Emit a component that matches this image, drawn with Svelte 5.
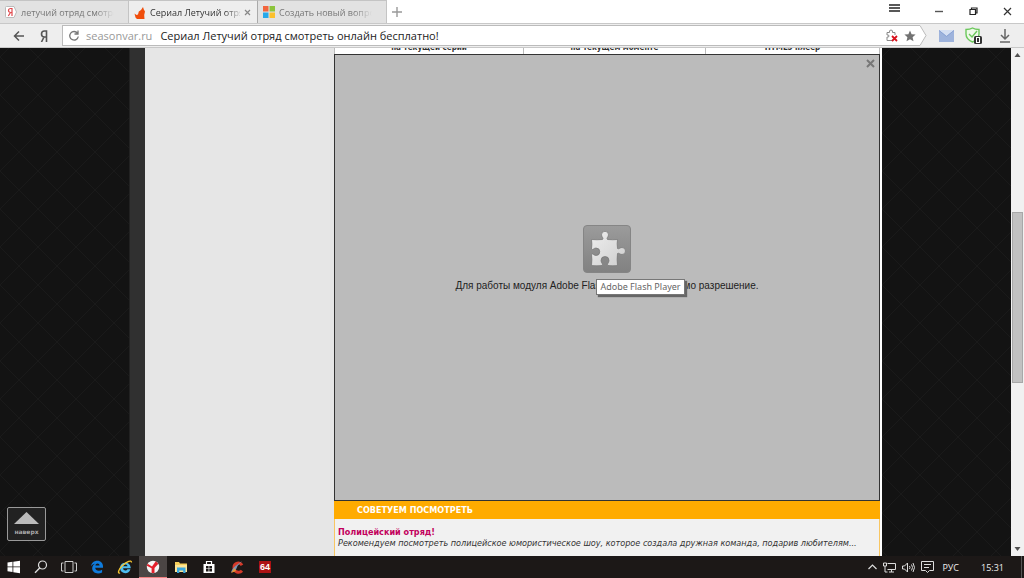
<script>
  const tabs = [
    { title: 'летучий отряд смотреть', icon: 'yandex' },
    { title: 'Сериал Летучий отряд', icon: 'fox', active: true },
    { title: 'Создать новый вопрос', icon: 'ms' }
  ];
  let address = $state('Сериал Летучий отряд смотреть онлайн бесплатно!');
  const apps = [
    { id: 'start', label: 'Пуск' },
    { id: 'search', label: 'Поиск' },
    { id: 'tasks', label: 'Представление задач' },
    { id: 'edge', label: 'Microsoft Edge' },
    { id: 'ie', label: 'Internet Explorer' },
    { id: 'browser', label: 'Яндекс.Браузер', active: true },
    { id: 'folder', label: 'Проводник' },
    { id: 'store', label: 'Магазин' },
    { id: 'ccleaner', label: 'CCleaner' },
    { id: 'aida', label: 'AIDA64' }
  ];
</script>

<div class="screen">
  <header class="tabbar">
    {#each tabs as tab}
      <div class="tab" class:active={tab.active}>
        <svg class="fav" viewBox="0 0 12 12" aria-hidden="true">
          {#if tab.icon === 'yandex'}
            <path d="M1.500 .5h7.500l2.500 5.500-2.500 5.500H1.500q-1 0-1-1v-9q0-1 1-1z" fill="#fff" stroke="#bbb" />
            <path d="M7 10V2.500H5.700C4.200 2.500 3.500 3.400 3.500 4.500S4.200 6.500 5.700 6.500H7M5.500 6.500L3.300 10" fill="none" stroke="#e0484c" stroke-width="1.200" />
          {:else if tab.icon === 'fox'}
            <path d="M.5 6.500l2 1.500L4 7.500l.8-3L7 3l2-3 .8 2.500L11 4.500 10.200 8l.3 4H3L1.500 10.500z" fill="#f04e0c" />
          {:else}
            <path d="M0 0h5.500v5.500H0z" fill="#f2643c" /><path d="M6.500 0H12v5.500H6.500z" fill="#8cc43c" />
            <path d="M0 6.500h5.500V12H0z" fill="#28a8ea" /><path d="M6.500 6.500H12V12H6.500z" fill="#fcc02c" />
          {/if}
        </svg>
        <a class="title" href="#top">{tab.title}</a>
        {#if tab.active}
          <button class="close" aria-label="Закрыть вкладку"><svg width="7" height="7" viewBox="0 0 7 7"><path d="M1 1l5 5M6 1L1 6" stroke="#888" stroke-width="1.200" /></svg></button>
        {/if}
      </div>
    {/each}
    <button class="new" aria-label="Новая вкладка"><svg width="10" height="10" viewBox="0 0 10 10"><path d="M5 0v10M0 5h10" stroke="#999" stroke-width="1.400" /></svg></button>
    <div class="window">
      <button aria-label="Меню"><svg class="menu" width="12" height="9" viewBox="0 0 12 9"><path d="M0 1h11M0 4h11M0 7h11" stroke="#222" stroke-width="1.700" /></svg></button>
      <button aria-label="Свернуть"><svg width="8" height="9" viewBox="0 0 8 9"><path d="M0 4.500h8" stroke="#555" stroke-width="1.400" /></svg></button>
      <button aria-label="Развернуть"><svg width="9" height="9" viewBox="0 0 9 9"><path d="M1 2.500h5.500v5H1zM2.500 2.500V1H8v5H6.500" fill="none" stroke="#222" stroke-width="1.200" /></svg></button>
      <button aria-label="Закрыть"><svg width="9" height="9" viewBox="0 0 9 9"><path d="M1 1l7 7M8 1L1 8" stroke="#333" stroke-width="1.200" /></svg></button>
    </div>
  </header>

  <nav class="toolbar">
    <button class="back" aria-label="Назад"><svg width="12" height="12" viewBox="0 0 12 12"><path d="M6 1.500L1.500 6 6 10.500M1.500 6H11" fill="none" stroke="#555" stroke-width="1.500" /></svg></button>
    <button class="ya" aria-label="Яндекс"><svg width="8" height="12" viewBox="0 0 8 12"><path d="M6.500 12V1H4.500C2.500 1 1.500 2.200 1.500 4s1 3 3 3h2M4 7L1.500 12" fill="none" stroke="#555" stroke-width="1.600" /></svg></button>
    <div class="address">
      <button aria-label="Обновить"><svg width="12" height="12" viewBox="0 0 12 12"><path d="M9.500 3.200A4.300 4.300 0 1 0 10.300 6.500M10 .5v3.500H6.500" fill="none" stroke="#777" stroke-width="1.300" /></svg></button>
      <label for="url">seasonvar.ru</label>
      <input id="url" type="text" bind:value={address} />
      <svg width="13" height="13" viewBox="0 0 13 13" aria-hidden="true">
        <path d="M2 11.500V8q2 .5 2-1T2 6V3.500h2.500Q4 1 6 1t1.500 2.500H10V6M2 11.500h5" fill="none" stroke="#888" />
        <path d="M7 7l5 5M12 7l-5 5" stroke="#d8101c" stroke-width="1.800" />
      </svg>
      <button aria-label="В закладки"><svg width="12" height="12" viewBox="0 0 12 12"><path d="M6 .5l1.600 3.800 4 .3-3 2.700.9 4L6 9.200l-3.500 2.100.9-4-3-2.700 4-.3z" fill="#727272" /></svg></button>
    </div>
    <svg class="tip" width="7" height="21" viewBox="0 0 7 21" aria-hidden="true"><path d="M0 0l6 10.500L0 21z" fill="#fff" /><path d="M0 .5l6 10L0 20.500" fill="none" stroke="#bbb" /></svg>
    <button class="mail" aria-label="Почта"><svg width="15" height="12" viewBox="0 0 15 12"><path d="M0 0h15v12H0z" fill="#9eb3dc" /><path d="M0 0l7.500 6L15 0z" fill="#d5dff2" /><path d="M0 .5l7.500 6 7.500-6" fill="none" stroke="#8aa3d4" /></svg></button>
    <button class="shield" aria-label="Защита">
      <svg width="18" height="18" viewBox="0 0 18 18">
        <path d="M7.500 1Q10 2.500 14 2.500V7c0 4-3 6.500-6.500 8C4 13.500 1 11 1 7V2.500Q5 2.500 7.500 1z" fill="#eefae9" stroke="#6cc85c" stroke-width="1.400" />
        <path d="M4 7l3 3 5-6" fill="none" stroke="#6cc85c" stroke-width="1.400" />
        <rect x="9" y="9" width="8" height="8" rx="1.500" fill="#333" /><rect x="11.500" y="10.500" width="3" height="5" fill="none" stroke="#fff" />
      </svg>
    </button>
    <button class="down" aria-label="Загрузки"><svg width="12" height="14" viewBox="0 0 12 14"><path d="M6 0v10M2 6l4 4 4-4M1 13h10" fill="none" stroke="#666" stroke-width="1.500" /></svg></button>
  </nav>

  <div class="viewport">
    <div class="page" id="top">
      <div class="dark"></div>
      <div class="edge"></div>
      <aside></aside>
      <main>
        <div class="options"><span>на текущей серии</span><span>на текущем моменте</span><span>HTML5 плеер</span></div>
        <section class="player">
          <button class="dismiss" aria-label="Скрыть модуль"><svg width="9" height="9" viewBox="0 0 9 9"><path d="M1 1l7 7M8 1L1 8" stroke="#777" stroke-width="2" /></svg></button>
          <div class="plugin">
            <svg width="48" height="48" viewBox="0 0 48 48" aria-hidden="true">
              <defs>
                <linearGradient id="tile" x2="0" y2="1"><stop stop-color="#9b9b9b" /><stop offset="1" stop-color="#818181" /></linearGradient>
                <linearGradient id="piece" x2="1" y2="1"><stop stop-color="#eee" /><stop offset="1" stop-color="#cecece" /></linearGradient>
              </defs>
              <rect x=".5" y=".5" width="47" height="47" rx="3.500" fill="url(#tile)" stroke="#858585" />
              <path d="M8.500 14.500Q14 15 19.500 14.500c1.500-1.500-1-2.500-1-4.700a3.500 3.500 0 0 1 7 0c0 2.200-2.500 3.200-1 4.700Q30 15 34.500 14.500q-.7 4 0 9c1.500 1 2.500-1 4.500-1a3.500 3.500 0 0 1 0 7c-2 0-3-2-4.500-1q-.8 6 0 12Q30 41 25 40.500c-1.500-1.500 1-2.500 1-5a4 4 0 0 0-8 0c0 2.500 2.500 3.500 1 5Q14 41 8.500 40.500q.8-6 0-11c1.500-1.500 2 1 4.500 1a3.500 3.500 0 0 0 0-7.500c-2.500 0-3 2.500-4.500 1q.8-5 0-9.500z" fill="url(#piece)" stroke="#747474" stroke-width=".7" />
            </svg>
            <p>Для работы модуля Adobe Flash Player необходимо разрешение.</p>
            <span class="tooltip" role="tooltip">Adobe Flash Player</span>
          </div>
        </section>
        <section class="advice">
          <h2>СОВЕТУЕМ ПОСМОТРЕТЬ</h2>
          <div class="entry">
            <a href="#top">Полицейский отряд!</a>
            <p>Рекомендуем посмотреть полицейское юмористическое шоу, которое создала дружная команда, подарив любителям...</p>
          </div>
        </section>
      </main>
      <div class="dark"></div>
      <button class="totop"><svg width="25" height="12" viewBox="0 0 25 12" aria-hidden="true"><path d="M12.500 0L25 12H0z" fill="#bbb" /></svg>наверх</button>
    </div>
    <div class="scroll" aria-hidden="true">
      <svg width="7" height="4" viewBox="0 0 7 4"><path d="M3.500 0L6.500 4h-6z" fill="#505050" /></svg>
      <div class="track"><div class="thumb"></div></div>
      <svg width="7" height="4" viewBox="0 0 7 4"><path d="M3.500 4L6.500 0h-6z" fill="#505050" /></svg>
    </div>
  </div>

  <footer class="taskbar">
    {#each apps as app}
      <button class="app" class:running={app.active} aria-label={app.label}>
        <svg width="16" height="14" viewBox="0 0 16 14">
          {#if app.id === 'start'}
            <path d="M1.500 2.500L6.500 1.800v4.700h-5zM7.300 1.700L14 .7v5.800H7.300zM1.500 7.300h5V12l-5-.7zM7.300 7.300H14V13.200l-6.700-1z" fill="#fff" />
          {:else if app.id === 'search'}
            <circle cx="9.500" cy="5" r="4" fill="none" stroke="#ddd" stroke-width="1.200" /><path d="M6.700 8L2 12.700" stroke="#ddd" stroke-width="1.400" />
          {:else if app.id === 'tasks'}
            <path d="M4 1.500h8v11H4zM2.500 3h-2v8h2M13.500 3h2v8h-2" fill="none" stroke="#ccc" />
          {:else if app.id === 'edge'}
            <path d="M2 6.200C2.500 3 5 .8 8.300.8c3.600 0 5.700 2.700 5.700 5.500v1.500H6.200c.2 3.200 4.300 3.500 6.900 1.900v2.700C8.500 14.800 3 12.800 3.200 8c.1-2 1.200-3.500 2.800-4.300C4.300 3.800 3 4.700 2 6.200zm4.400-.6h4.200C10.600 2.600 6.600 2.800 6.400 5.600z" fill="#0f7bdc" />
          {:else if app.id === 'ie'}
            <path d="M3 7.500a5.400 5.400 0 0 1 10.700 0v.8H6.100c.2 2.700 3.500 2.800 4.300 1h3C12 15 3 14.400 3 7.500zm3.200-1.300h4.300c-.2-2.400-4-2.400-4.300 0z" fill="#4cbcf0" />
            <path d="M3 12.700C.5 14.500 1 9.500 5.500 5.500S14.500-.5 14.500 2.500" fill="none" stroke="#f5c531" stroke-width="1.300" />
          {:else if app.id === 'browser'}
            <circle cx="8" cy="7" r="6.200" fill="#f6f6f6" /><path d="M2.600 3.800L7 6.500 10.800 1.300l2.600 2.500L9.500 8v5H6.600V8.300L1.800 5.700z" fill="#e4202c" />
          {:else if app.id === 'folder'}
            <path d="M2 2h4l1 1.500h7V12H2z" fill="#f5cf5b" /><path d="M2 5h12v7H2z" fill="#fbe497" /><path d="M4 7.500h8.500V13h-2.300v-2.500H6.300V13H4z" fill="#39a8e0" />
          {:else if app.id === 'store'}
            <path d="M2.500 4h11v9h-11z" fill="#fff" /><path d="M5.500 4V1.500h5V4" fill="none" stroke="#fff" stroke-width="1.200" /><path d="M5 6h2.600v2.500H5zM8.300 6H11v2.500H8.300zM5 9h2.600v2.500H5zM8.300 9H11v2.500H8.300z" fill="#1c1817" />
          {:else if app.id === 'ccleaner'}
            <path d="M13 5.200C11 1.800 5 2.500 5 7.500s5.500 6 8 3.300" fill="none" stroke="#d63a2a" stroke-width="3" /><path d="M13 1L8.500 6 7 9.500l-5 3C3 9 4.500 7.500 7 5.500z" fill="#7b95b4" /><path d="M5.500 8L2 13l5-2z" fill="#e69a37" />
          {:else}
            <path d="M2 1h12v12H2z" fill="#ad1214" /><text x="8" y="10" text-anchor="middle">64</text>
          {/if}
        </svg>
      </button>
    {/each}
    <div class="tray">
      <button aria-label="Скрытые значки"><svg width="9" height="6" viewBox="0 0 9 6"><path d="M.5 5l4-4 4 4" fill="none" stroke="#ddd" stroke-width="1.200" /></svg></button>
      <button aria-label="Сеть"><svg width="13" height="11" viewBox="0 0 13 11"><path d="M4.500 1.500h8v6h-8M6 10h5M8.500 7.500V10M.5 1h3v3h-3zM2 4v6h2.500" fill="none" stroke="#ddd" /></svg></button>
      <button aria-label="Громкость"><svg width="13" height="11" viewBox="0 0 13 11"><path d="M.5 4h2l3-3v9l-3-3h-2zM7.500 4q1 1.500 0 3M9.500 2.500q2 3 0 6M11 1q3 4.500 0 9" fill="none" stroke="#ddd" /></svg></button>
      <button aria-label="Уведомления"><svg width="13" height="12" viewBox="0 0 13 12"><path d="M.5 .5h12v9h-4l-2 2-2-2h-4zM3 3.500h7M3 6.500h5" fill="none" stroke="#ddd" /></svg></button>
      <button class="lang">РУС</button>
      <time>15:31</time>
      <span class="desk"></span>
    </div>
  </footer>
</div>

<style>
  :global(body) { margin: 0; }
  * { box-sizing: border-box; }
  button { border: 0; padding: 0; background: none; font: inherit; color: inherit; display: flex; align-items: center; justify-content: center; flex: none; }
  svg { display: block; flex: none; }
  a { text-decoration: none; color: inherit; }
  p, h2 { margin: 0; }
  .screen { height: 100vh; display: flex; flex-direction: column; overflow: hidden; font-family: "Open Sans", "Noto Sans", sans-serif; }

  .tabbar { height: 23px; display: flex; align-items: stretch; background: #fff; font-size: 9px; }
  .tab { width: 129px; display: flex; align-items: center; gap: 4px; padding: 0 6px 0 5px; background: #e2e2e2; color: #777; border: solid #c4c4c4; border-width: 1px 1px 0 0; }
  .tab.active { background: #eee; color: #333; border-right-color: #aaa; margin-bottom: -1px; }
  .fav { width: 12px; height: 12px; }
  .title { flex: 1; overflow: hidden; white-space: nowrap; mask-image: linear-gradient(90deg, #000 75px, transparent 93px); }
  .new { width: 20px; }
  .window { margin-left: auto; display: flex; }
  .window button { width: 34px; }
  .window button:first-child { width: 54px; }
  .menu { margin-bottom: 6px; }

  .toolbar { height: 25px; display: flex; align-items: center; padding-right: 13px; background: #eee; border: solid #c8c8c8; border-width: 1px 0; color: #333; }
  .back { width: 38px; }
  .ya { width: 12px; margin-right: 12px; }
  .address { flex: 1; min-width: 0; height: 21px; display: flex; align-items: center; background: #fff; border: 1px solid #bbb; border-right: 0; font-size: 11px; padding-left: 5px; gap: 6px; }
  .address label { color: #999; }
  .address input { flex: 1; min-width: 0; border: 0; padding: 0 0 0 2px; outline: 0; background: none; font: inherit; color: #222; }
  .address button:last-child { margin-right: 4px; }
  .mail { margin: 0 11px 0 12px; }
  .down { margin-left: 16px; }

  .viewport { flex: 1; min-height: 0; display: flex; }
  .page { flex: 1; min-width: 0; position: relative; display: grid; grid-template-columns: 1fr 16px 189px 548px 1fr; overflow: hidden; }
  .dark { background-color: #131313; background-image: linear-gradient(45deg, transparent 49%, #1a1a1a 49% 51%, transparent 51%), linear-gradient(135deg, transparent 49%, #1a1a1a 49% 51%, transparent 51%); background-size: 38px 38px; background-position: 0 9px; }
  .edge { background: #303030; border-left: 1px solid #222; }
  aside { background: #e6e6e6; }
  main { min-height: 0; display: flex; flex-direction: column; background: #fff; padding-right: 2px; }
  .options { height: 6px; overflow: hidden; display: grid; grid-template-columns: 189px 182px 1fr; align-content: end; border: solid #bbb; border-width: 0 1px; font: bold 8px/12px "DejaVu Sans Condensed", sans-serif; color: #333; text-align: center; }
  .options span { border-right: 1px solid #bbb; }
  .options span:last-child { border: 0; }
  .player { flex: 1; min-height: 0; position: relative; display: flex; align-items: center; justify-content: center; background: #bbb; border: 1px solid #333; }
  .dismiss { position: absolute; top: 4px; right: 4px; }
  .plugin { position: relative; display: flex; flex-direction: column; align-items: center; gap: 6px; padding-bottom: 38px; font: 10px/14px "Liberation Sans", sans-serif; color: #222; white-space: nowrap; }
  .tooltip { position: absolute; left: 141px; top: 54px; height: 16px; padding: 0 3px; background: #fff; border: 1px solid #777; box-shadow: 2px 2px 1px #666; font: 9px/14px "Noto Sans", sans-serif; color: #666; }
  .advice h2 { height: 18px; padding-left: 23px; background: #ffab00; color: #fff; font: bold 9px/18px "DejaVu Sans Condensed", sans-serif; }
  .entry { height: 37px; padding: 8px 3px 0; background: #f1f1f1; border: solid #f8c662; border-width: 0 1px; font: 9px/11px "DejaVu Sans Condensed", sans-serif; color: #333; white-space: nowrap; }
  .entry a { display: block; font-weight: bold; color: #c2005c; }
  .entry p { font-style: italic; }
  .totop { position: absolute; left: 7px; bottom: 15px; width: 39px; height: 34px; flex-direction: column; gap: 3px; background: #222; border: 1px solid #999; border-radius: 2px; font: bold 6px/9px "DejaVu Sans", sans-serif; color: #aaa; }

  .scroll { width: 13px; display: flex; flex-direction: column; align-items: center; padding: 5px 0; background: #f1f1f1; }
  .track { flex: 1; align-self: stretch; padding: 0 1px; }
  .thumb { margin-top: 155px; height: 171px; background: #c1c1c1; border: 1px solid #a8a8a8; }

  .taskbar { height: 22px; display: flex; background: #1c1817; color: #eee; font-size: 9px; }
  .app { width: 28px; }
  .app:first-child { width: 27px; }
  .app text { font: bold 9px "Liberation Sans", sans-serif; fill: #fff; }
  .running { background: #4b4544; border-bottom: 1px solid #f08080; }
  .tray { margin-left: auto; display: flex; align-items: center; gap: 6px; }
  .lang { margin-left: 2px; }
  time { margin: 0 11px 0 16px; }
  .desk { width: 3px; height: 100%; border-left: 1px solid #555; }
</style>
